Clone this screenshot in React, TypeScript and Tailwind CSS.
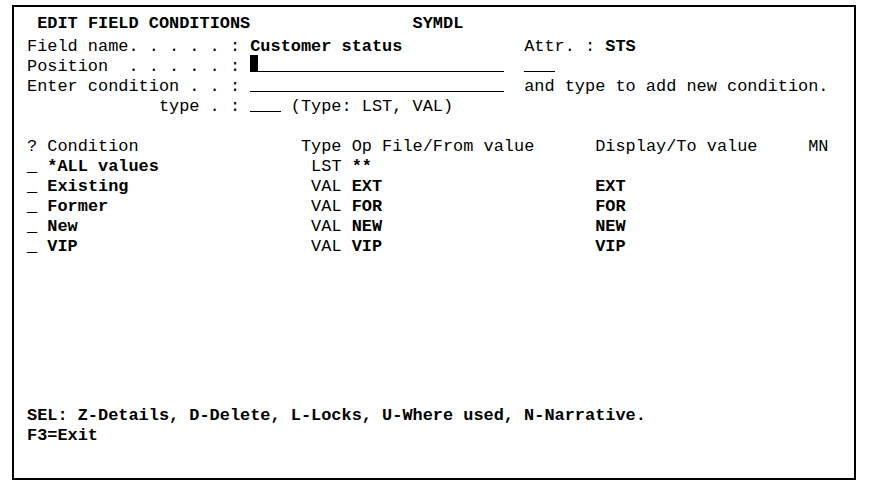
import React from "react";

const ROW = "h-[20px] leading-[20px] whitespace-pre";

function Field({ w, cursor }: { w: string; cursor?: boolean }) {
  return (
    <span className={`relative inline-block align-top h-[15px] border-b border-black ${w}`}>
      {cursor && <span className="absolute left-0 top-[-2px] w-[8px] h-[16px] bg-black" />}
    </span>
  );
}

const entries = [
  { name: "*ALL values", type: "LST", op: "**", from: "", to: "" },
  { name: "Existing", type: "VAL", op: "", from: "EXT", to: "EXT" },
  { name: "Former", type: "VAL", op: "", from: "FOR", to: "FOR" },
  { name: "New", type: "VAL", op: "", from: "NEW", to: "NEW" },
  { name: "VIP", type: "VAL", op: "", from: "VIP", to: "VIP" },
];

export default function App() {
  return (
    <div className="w-[880px] h-[491px] bg-white overflow-hidden pt-[5px] pl-[12px]">
      <div className="w-[844px] h-[475px] border-2 border-black pt-[7px] pl-[13px] text-black font-['Liberation_Mono','DejaVu_Sans_Mono',monospace] text-[16.92px]">
        <div className={ROW}>
          {" "}
          <b>EDIT FIELD CONDITIONS</b>
          {" ".repeat(16)}
          <b>SYMDL</b>
        </div>
        <div className={`${ROW} mt-[3px]`}>
          {"Field name. . . . . : "}
          <b>{"Customer status".padEnd(27)}</b>
          {"Attr. : "}
          <b>STS</b>
        </div>
        <div className={ROW}>
          {"Position  . . . . . : "}
          <Field w="w-[25ch]" cursor />
          {"  "}
          <Field w="w-[3ch]" />
        </div>
        <div className={ROW}>
          {"Enter condition . . : "}
          <Field w="w-[25ch]" />
          {"  "}
          {"and type to add new condition."}
        </div>
        <div className={ROW}>
          {" ".repeat(13) + "type . : "}
          <Field w="w-[3ch]" />
          {" (Type: LST, VAL)"}
        </div>
        <div className={ROW}> </div>
        <div className={ROW}>
          {"? Condition".padEnd(27)}
          {"Type Op File/From value".padEnd(29)}
          {"Display/To value".padEnd(21)}
          {"MN"}
        </div>
        {entries.map((e) => (
          <div key={e.name} className={ROW}>
            <b>_</b>
            {" "}
            <b>{e.name.padEnd(26)}</b>
            {e.type}
            {" "}
            {e.op ? <b>{e.op}</b> : <b>{e.from.padEnd(24)}</b>}
            <b>{e.to}</b>
          </div>
        ))}
        <div className="h-[149px]" />
        <div className={ROW}>
          <b>SEL: Z-Details, D-Delete, L-Locks, U-Where used, N-Narrative.</b>
        </div>
        <div className={ROW}>
          <b>F3=Exit</b>
        </div>
      </div>
    </div>
  );
}
